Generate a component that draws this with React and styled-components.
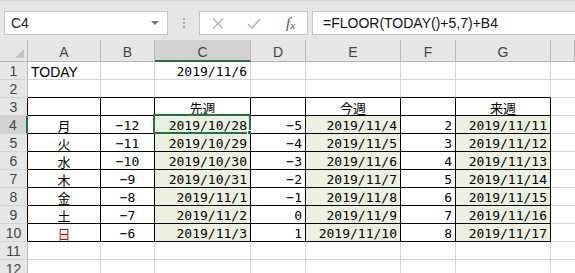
import React from 'react'
import styled, { createGlobalStyle } from 'styled-components'

const GlobalStyle = createGlobalStyle`
  body {
    margin: 0;
    background: #fff;
    overflow: hidden;
  }
`

const GREEN = '#217346'
const GRID = '#d4d4d4'
const HEAD_LINE = '#b7b7b7'

const days = ['月', '火', '水', '木', '金', '土', '日']
const lastWeek = ['2019/10/28', '2019/10/29', '2019/10/30', '2019/10/31', '2019/11/1', '2019/11/2', '2019/11/3']
const thisWeek = ['2019/11/4', '2019/11/5', '2019/11/6', '2019/11/7', '2019/11/8', '2019/11/9', '2019/11/10']
const nextWeek = ['2019/11/11', '2019/11/12', '2019/11/13', '2019/11/14', '2019/11/15', '2019/11/16', '2019/11/17']

const columns = ['A', 'B', 'C', 'D', 'E', 'F', 'G', '']

const App = () => {
  // build the 12 visible rows, each an array of 8 cells (A..H)
  const rows = []
  for (let r = 1; r <= 12; r++) {
    let cells = Array.from({ length: 8 }, () => ({ text: '' }))
    if (r === 1) {
      cells[0] = { text: 'TODAY', align: 'left', font: 'sans' }
      cells[2] = { text: '2019/11/6', align: 'right' }
    }
    if (r === 3) {
      cells[2] = { text: '先週', align: 'center', font: 'jp' }
      cells[4] = { text: '今週', align: 'center', font: 'jp' }
      cells[6] = { text: '来週', align: 'center', font: 'jp' }
    }
    if (r >= 4 && r <= 10) {
      const i = r - 4
      cells[0] = { text: days[i], align: 'center', font: 'jp', red: i === 6 }
      cells[1] = { text: '\u2212' + (12 - i), align: 'center' }
      cells[2] = { text: lastWeek[i], align: 'right', fill: true }
      const d = i - 5
      cells[3] = { text: d < 0 ? '\u2212' + -d : String(d), align: 'right' }
      cells[4] = { text: thisWeek[i], align: 'right', fill: true }
      cells[5] = { text: String(i + 2), align: 'right' }
      cells[6] = { text: nextWeek[i], align: 'right', fill: true }
    }
    rows.push(cells)
  }

  const inTable = (r, c) => r >= 3 && r <= 10 && c <= 6

  return (
    <Window>
      <GlobalStyle />
      <FormulaBar>
        <NameBox>
          C4
          <Caret />
        </NameBox>
        <Grip>
          <span />
          <span />
          <span />
        </Grip>
        <FxBox>
          <svg width="12" height="11" viewBox="0 0 12 11">
            <path d="M1 0.5 L11 10.5 M11 0.5 L1 10.5" stroke="#b4b4b4" strokeWidth="1.3" fill="none" />
          </svg>
          <svg width="14" height="11" viewBox="0 0 14 11">
            <path d="M1 6 L5 10 L13 1" stroke="#b4b4b4" strokeWidth="1.6" fill="none" />
          </svg>
          <Fx>
            f<sub>x</sub>
          </Fx>
        </FxBox>
        <FormulaInput>=FLOOR(TODAY()+5,7)+B4</FormulaInput>
      </FormulaBar>

      <Sheet>
        <Corner>
          <svg width="9" height="9" viewBox="0 0 9 9">
            <polygon points="9,0 9,9 0,9" fill="#c4c4c4" />
          </svg>
        </Corner>
        {columns.map((c) => (
          <ColHead key={c || 'H'} $active={c === 'C'}>
            {c}
          </ColHead>
        ))}

        {rows.map((cells, ri) => {
          const r = ri + 1
          return (
            <React.Fragment key={r}>
              <RowHead $active={r === 4} $edge={r >= 3 && r <= 10}>
                {r}
              </RowHead>
              {cells.map((cell, c) => (
                <Cell
                  key={c}
                  $align={cell.align}
                  $font={cell.font}
                  $red={cell.red}
                  $fill={cell.fill}
                  $br={inTable(r, c) ? '#000' : GRID}
                  $bb={c <= 6 && r >= 2 && r <= 10 ? '#000' : GRID}
                  $noRight={c === 7}
                >
                  {cell.text}
                  {r === 4 && c === 2 && (
                    <Selection>
                      <Handle />
                    </Selection>
                  )}
                </Cell>
              ))}
            </React.Fragment>
          )
        })}
      </Sheet>
    </Window>
  )
}

const Window = styled.div`
  width: 575px;
  height: 273px;
  overflow: hidden;
  background: #fff;
`

const FormulaBar = styled.div`
  height: 40px;
  box-sizing: border-box;
  background: #e6e6e6;
  border-top: 1px solid #d8d8d8;
  display: flex;
  align-items: flex-start;
  padding: 10px 0 0 4px;
`

const NameBox = styled.div`
  position: relative;
  width: 164px;
  height: 24px;
  box-sizing: border-box;
  background: #fff;
  border: 1px solid #c6c6c6;
  font-family: 'Liberation Sans', Arial, sans-serif;
  font-size: 14px;
  color: #222;
  display: flex;
  align-items: center;
  padding-left: 6px;
`

const Caret = styled.span`
  position: absolute;
  right: 8px;
  top: 9px;
  width: 0;
  height: 0;
  border-left: 4px solid transparent;
  border-right: 4px solid transparent;
  border-top: 4px solid #777;
`

const Grip = styled.div`
  width: 31px;
  height: 24px;
  display: flex;
  flex-direction: column;
  align-items: center;
  justify-content: center;
  gap: 2px;

  span {
    width: 2px;
    height: 2px;
    background: #a8a8a8;
  }
`

const FxBox = styled.div`
  width: 109px;
  height: 24px;
  box-sizing: border-box;
  background: #fff;
  border: 1px solid #c6c6c6;
  display: flex;
  align-items: center;
  padding-left: 12px;
  gap: 23px;
`

const Fx = styled.span`
  font-family: 'Liberation Serif', 'Times New Roman', serif;
  font-style: italic;
  font-size: 15px;
  color: #555;
  margin-left: 2px;

  sub {
    font-size: 11px;
    vertical-align: -1px;
  }
`

const FormulaInput = styled.div`
  flex: 1;
  height: 24px;
  box-sizing: border-box;
  margin-left: 4px;
  background: #fff;
  border: 1px solid #c6c6c6;
  border-right: none;
  font-family: 'Liberation Sans', Arial, sans-serif;
  font-size: 14px;
  color: #111;
  display: flex;
  align-items: center;
  padding-left: 10px;
`

const Sheet = styled.div`
  display: grid;
  grid-template-columns: 28px 73px 54px 96px 55px 95px 55px 95px 1fr;
  grid-template-rows: 22px repeat(12, 18px);
  background: #fff;
`

const Corner = styled.div`
  box-sizing: border-box;
  background: #e6e6e6;
  border-right: 1px solid ${HEAD_LINE};
  border-bottom: 1px solid ${HEAD_LINE};
  display: flex;
  align-items: flex-end;
  justify-content: flex-end;
  padding: 0 3px 3px 0;
`

const ColHead = styled.div`
  box-sizing: border-box;
  background: ${(p) => (p.$active ? '#d2d2d2' : '#e6e6e6')};
  border-right: 1px solid ${HEAD_LINE};
  border-bottom: ${(p) => (p.$active ? `2px solid ${GREEN}` : `1px solid ${HEAD_LINE}`)};
  font-family: 'Liberation Sans', Arial, sans-serif;
  font-size: 14px;
  color: #444;
  display: flex;
  align-items: center;
  justify-content: center;
  padding-top: ${(p) => (p.$active ? '3px' : '2px')};
`

const RowHead = styled.div`
  box-sizing: border-box;
  background: ${(p) => (p.$active ? '#d2d2d2' : '#e6e6e6')};
  border-right: ${(p) =>
    p.$active ? `2px solid ${GREEN}` : `1px solid ${p.$edge ? '#000' : HEAD_LINE}`};
  border-bottom: 1px solid ${GRID};
  font-family: 'Liberation Sans', Arial, sans-serif;
  font-size: 14px;
  line-height: 1;
  color: #444;
  display: flex;
  align-items: center;
  justify-content: center;
  padding-top: 1px;
`

const Cell = styled.div`
  position: relative;
  box-sizing: border-box;
  min-width: 0;
  background: ${(p) => (p.$fill ? '#ebf1de' : '#fff')};
  border-right: ${(p) => (p.$noRight ? 'none' : `1px solid ${p.$br}`)};
  border-bottom: 1px solid ${(p) => p.$bb};
  display: flex;
  align-items: center;
  justify-content: ${(p) =>
    p.$align === 'right' ? 'flex-end' : p.$align === 'center' ? 'center' : 'flex-start'};
  padding: 2px 3px 0 3px;
  white-space: nowrap;
  line-height: 1;
  font-family: ${(p) =>
    p.$font === 'jp'
      ? "'Noto Sans CJK JP', sans-serif"
      : p.$font === 'sans'
      ? "'Liberation Sans', Arial, sans-serif"
      : "'DejaVu Sans Mono', 'Liberation Mono', monospace"};
  font-size: ${(p) => (p.$font === 'jp' ? '13px' : p.$font === 'sans' ? '14px' : '13px')};
  color: ${(p) => (p.$red ? '#e00000' : '#000')};
`

const Selection = styled.div`
  position: absolute;
  top: -2px;
  left: -2px;
  right: -1px;
  bottom: -1px;
  border: 2px solid ${GREEN};
  pointer-events: none;
`

const Handle = styled.div`
  position: absolute;
  right: -5px;
  bottom: -5px;
  width: 5px;
  height: 5px;
  background: ${GREEN};
  border: 1px solid #fff;
`

export default App
